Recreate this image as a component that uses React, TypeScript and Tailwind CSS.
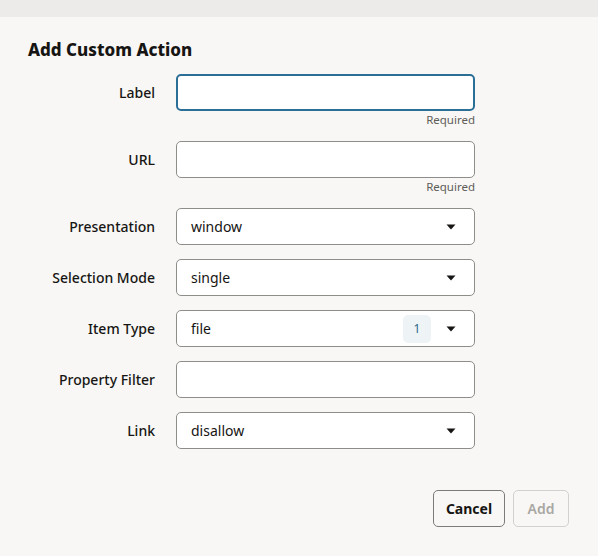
import React from 'react'

function Caret() {
  return (
    <svg width="10" height="6" viewBox="0 0 10 6" className="shrink-0">
      <path d="M0.5 0.5 H9.5 L5 5.5 Z" fill="#161513" />
    </svg>
  )
}

function Field({ label, children, hint }: { label: string; children: React.ReactNode; hint?: string }) {
  return (
    <div className="grid grid-cols-[127px_299px] gap-x-[21px]">
      <div className="h-[37px] flex items-center justify-end text-[14px] font-medium text-[#161513]">{label}</div>
      <div className="flex flex-col">
        {children}
        {hint && <div className="text-right text-[11.5px] leading-[15px] text-[#5f5d59] mt-[1px]">{hint}</div>}
      </div>
    </div>
  )
}

function TextBox({ focused }: { focused?: boolean }) {
  return (
    <div
      className={
        focused
          ? 'h-[37px] rounded-[5px] border-2 border-[#2b6f97] bg-white'
          : 'h-[37px] rounded-[5px] border border-[#8f8d89] bg-white'
      }
    />
  )
}

function SelectBox({ value, badge }: { value: string; badge?: string }) {
  return (
    <div className="h-[37px] rounded-[5px] border border-[#8f8d89] bg-white flex items-center pl-[14px] pr-[18px] text-[14px] text-[#161513]">
      <span className="flex-1">{value}</span>
      {badge && (
        <span className="w-[28px] h-[28px] rounded-[5px] bg-[#eef3f6] text-[#2b6a8d] text-[12px] flex items-center justify-center mr-[15px]">
          {badge}
        </span>
      )}
      <Caret />
    </div>
  )
}

export default function App() {
  return (
    <div className="w-[598px] h-[556px] bg-[#f8f7f5] flex flex-col" style={{ fontFamily: '"Noto Sans", sans-serif' }}>
      <div className="h-[17px] bg-[#ecebea] shrink-0" />
      <div className="px-[28px] pt-[22px] flex flex-col">
        <h1 className="text-[17px] leading-[22px] font-extrabold text-[#161513]">Add Custom Action</h1>
        <div className="mt-[13px] flex flex-col">
          <Field label="Label" hint="Required">
            <TextBox focused />
          </Field>
          <div className="mt-[14px]">
            <Field label="URL" hint="Required">
              <TextBox />
            </Field>
          </div>
          <div className="mt-[14px] flex flex-col gap-[14px]">
            <Field label="Presentation">
              <SelectBox value="window" />
            </Field>
            <Field label="Selection Mode">
              <SelectBox value="single" />
            </Field>
            <Field label="Item Type">
              <SelectBox value="file" badge="1" />
            </Field>
            <Field label="Property Filter">
              <TextBox />
            </Field>
            <Field label="Link">
              <SelectBox value="disallow" />
            </Field>
          </div>
        </div>
        <div className="mt-[41px] flex justify-end gap-[8px] pr-[1px]">
          <button className="h-[37px] w-[72px] rounded-[5px] border border-[#7d7b77] text-[14px] font-bold text-[#161513]">
            Cancel
          </button>
          <button className="h-[37px] w-[56px] rounded-[5px] border border-[#d3d1ce] text-[14px] font-semibold text-[#a9a7a3]">
            Add
          </button>
        </div>
      </div>
    </div>
  )
}
